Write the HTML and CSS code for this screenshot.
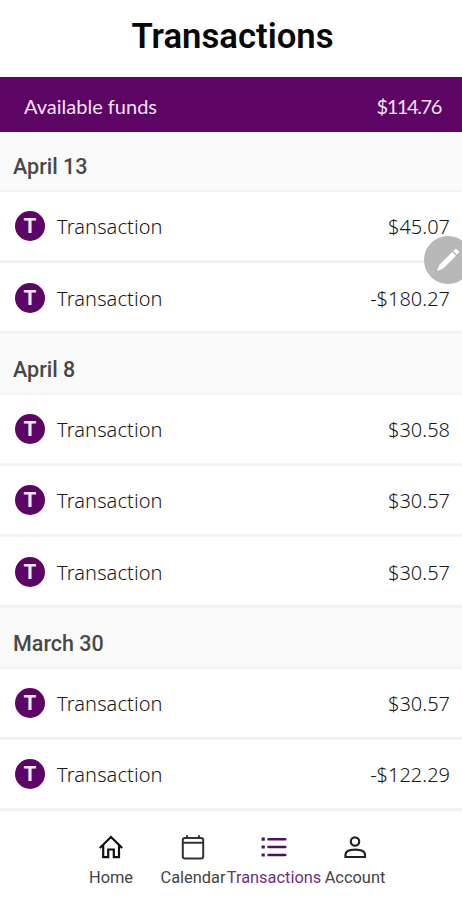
FILE: index.html
```
<!DOCTYPE html>
<html lang="en">

<head>
    <meta charset="UTF-8">
    <meta name="viewport" content="width=device-width, initial-scale=1.0">
    <title>Transactions</title>
    <link rel="stylesheet" href="styles.css">
</head>

<body>
    <header class="page-header">
        <h1>Transactions</h1>
    </header>

    <div class="funds">
        <span class="funds-label">Available funds</span>
        <span class="funds-amount">$114.76</span>
    </div>

    <!-- Transactions grouped by day -->
    <main>
        <h2>April 13</h2>
        <ul>
            <li><span class="badge">T</span><span class="name">Transaction</span><span class="amount">$45.07</span></li>
            <li><span class="badge">T</span><span class="name">Transaction</span><span class="amount">-$180.27</span></li>
        </ul>

        <h2>April 8</h2>
        <ul>
            <li><span class="badge">T</span><span class="name">Transaction</span><span class="amount">$30.58</span></li>
            <li><span class="badge">T</span><span class="name">Transaction</span><span class="amount">$30.57</span></li>
            <li><span class="badge">T</span><span class="name">Transaction</span><span class="amount">$30.57</span></li>
        </ul>

        <h2>March 30</h2>
        <ul>
            <li><span class="badge">T</span><span class="name">Transaction</span><span class="amount">$30.57</span></li>
            <li><span class="badge">T</span><span class="name">Transaction</span><span class="amount">-$122.29</span></li>
        </ul>
    </main>

    <!-- Floating edit button -->
    <button class="edit-button" aria-label="Edit">
        <svg width="48" height="48" viewBox="0 0 48 48">
            <path d="M13 35 L15.5 28.8 L28.3 16 L32 19.7 L19.2 32.5 Z" fill="#fff" />
            <path d="M29.3 15 L31 13.3 Q32 12.5 33 13.5 L34.5 15 Q35.3 16 34.5 17 L32.8 18.5 Z" fill="#fff" />
        </svg>
    </button>

    <!-- Bottom navigation -->
    <nav>
        <a class="nav-item home">
            <svg width="28" height="28" viewBox="0 0 28 28" fill="none" stroke="#111" stroke-width="2.2">
                <path d="M2.8 15 L14 4 L25.2 15 M6.2 12 V24.2 H11.2 V16.5 H16.8 V24.2 H22 V12" />
            </svg>
            <span>Home</span>
        </a>
        <a class="nav-item calendar">
            <svg width="28" height="28" viewBox="0 0 28 28" fill="none" stroke="#333" stroke-width="2">
                <rect x="3.8" y="5" width="20.4" height="20.4" rx="2.2" />
                <path d="M4 9.7 H24 M8 2.3 V5 M20 2.3 V5" />
            </svg>
            <span>Calendar</span>
        </a>
        <a class="nav-item transactions">
            <svg width="28" height="28" viewBox="0 0 28 28" fill="none" stroke="#4b1260" stroke-width="2.4">
                <path d="M8.5 6.2 H25.3 M8.5 14 H25.3 M8.5 22 H25.3" stroke-linecap="round" />
                <path d="M1.6 6.2 H4.8 M1.6 14 H4.8 M1.6 22 H4.8" stroke-width="3.2" />
            </svg>
            <span>Transactions</span>
        </a>
        <a class="nav-item account">
            <svg width="28" height="28" viewBox="0 0 28 28" fill="none" stroke="#222" stroke-width="2.2">
                <circle cx="14" cy="8.5" r="4.2" />
                <path d="M4.5 24 V21.5 C4.5 18 9.3 16.6 14.2 16.6 S24 18 24 21.5 V24 Z" />
            </svg>
            <span>Account</span>
        </a>
    </nav>
</body>

</html>
```
FILE: styles.css
```
* {
    box-sizing: border-box;
}

body {
    margin: 0;
    height: 900px;
    overflow: hidden;
    position: relative;
    background-color: #fff;
    color: #444;
    font-family: Roboto, sans-serif;
}

.page-header {
    height: 77px;
    padding-top: 15px;
    text-align: center;
}

h1 {
    margin: 0;
    padding-left: 3px;
    color: #080808;
    font-size: 34.7px;
    font-weight: 600;
    line-height: 42px;
}

.funds {
    display: flex;
    align-items: center;
    justify-content: space-between;
    height: 54.5px;
    padding: 3px 21px 0 24px;
    background-color: #5c0565;
    color: #f0e2f1;
    font-family: Lato, sans-serif;
    font-size: 20px;
}

.funds-amount {
    letter-spacing: -1.4px;
}

h2 {
    height: 60.25px;
    margin: 0;
    padding: 9.5px 13px 0;
    border-bottom: 2px solid #f3f3f3;
    background-color: #fafafa;
    color: #484848;
    font-size: 21.5px;
    font-weight: 500;
    line-height: 52px;
}

ul {
    margin: 0;
    padding: 0;
    list-style: none;
}

li {
    display: flex;
    align-items: center;
    height: 71.25px;
    padding: 1px 12px 0 15px;
    border-bottom: 3px solid #f3f3f3;
    color: #181818;
    font-family: "Noto Sans", sans-serif;
    font-size: 20px;
    font-weight: 300;
}

.badge {
    width: 30px;
    height: 30px;
    margin-right: 12px;
    border-radius: 50%;
    background-color: #5c0565;
    color: #f4eaf5;
    font-family: Inter, sans-serif;
    font-weight: 700;
    line-height: 30px;
    text-align: center;
}

.name {
    flex: 1;
    padding-top: 1px;
    letter-spacing: 0.1px;
}

.amount {
    padding-top: 1px;
}

.edit-button {
    position: absolute;
    top: 236px;
    left: 424px;
    width: 48px;
    height: 48px;
    padding: 0;
    border: none;
    border-radius: 50%;
    background-color: #b8b8b8;
}

.edit-button svg {
    display: block;
}

nav {
    display: flex;
    padding: 22px 0 0 70px;
}

.nav-item {
    display: flex;
    flex-direction: column;
    align-items: center;
    width: 82px;
    font-size: 16.4px;
    line-height: 20px;
    white-space: nowrap;
}

.nav-item svg {
    margin-bottom: 7px;
}

.nav-item.transactions {
    width: 80px;
    color: #703080;
}
```
